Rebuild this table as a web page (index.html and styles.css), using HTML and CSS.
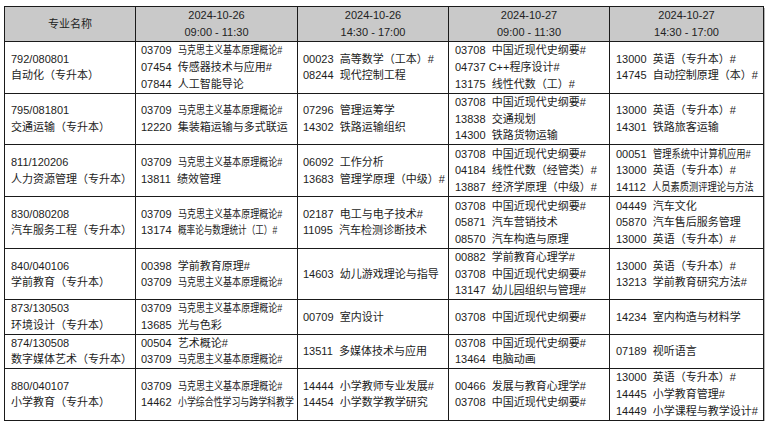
FILE: index.html
```html
<!DOCTYPE html>
<html lang="zh-CN">
<head>
<meta charset="utf-8">
<title>考试安排</title>
<link rel="stylesheet" href="styles.css">
</head>
<body>
<table class="sched">
  <colgroup>
    <col class="w1"><col class="w2"><col class="w3"><col class="w4"><col class="w5">
  </colgroup>
  <thead>
    <tr>
      <th>专业名称</th>
      <th><div>2024-10-26</div><div>09:00 - 11:30</div></th>
      <th><div>2024-10-26</div><div>14:30 - 17:00</div></th>
      <th><div>2024-10-27</div><div>09:00 - 11:30</div></th>
      <th><div>2024-10-27</div><div>14:30 - 17:00</div></th>
    </tr>
  </thead>
  <tbody>
    <tr class="r3">
      <td class="c1"><div>792/080801</div><div>自动化（专升本）</div></td>
      <td class="c2"><div>03709  <span class="sq sq82">马克思主义基本原理概论#</span></div><div>07454  传感器技术与应用#</div><div>07844  人工智能导论</div></td>
      <td class="c3"><div>00023  高等数学（工本）#</div><div>08244  现代控制工程</div></td>
      <td class="c4"><div>03708  中国近现代史纲要#</div><div>04737 C++程序设计#</div><div>13175  线性代数（工）#</div></td>
      <td class="c5"><div>13000  英语（专升本）#</div><div>14745  自动控制原理（本）#</div></td>
    </tr>
    <tr class="r3">
      <td class="c1"><div>795/081801</div><div>交通运输（专升本）</div></td>
      <td class="c2"><div>03709  <span class="sq sq82">马克思主义基本原理概论#</span></div><div>12220  集装箱运输与多式联运</div></td>
      <td class="c3"><div>07296  管理运筹学</div><div>14302  铁路运输组织</div></td>
      <td class="c4"><div>03708  中国近现代史纲要#</div><div>13838  交通规划</div><div>14300  铁路货物运输</div></td>
      <td class="c5"><div>13000  英语（专升本）#</div><div>14301  铁路旅客运输</div></td>
    </tr>
    <tr class="r3">
      <td class="c1"><div>811/120206</div><div>人力资源管理（专升本）</div></td>
      <td class="c2"><div>03709  <span class="sq sq82">马克思主义基本原理概论#</span></div><div>13811  绩效管理</div></td>
      <td class="c3"><div>06092  工作分析</div><div>13683  管理学原理（中级）#</div></td>
      <td class="c4"><div>03708  中国近现代史纲要#</div><div>04184  线性代数（经管类）#</div><div>13887  经济学原理（中级）#</div></td>
      <td class="c5"><div>00051  <span class="sq sq84">管理系统中计算机应用#</span></div><div>13000  英语（专升本）#</div><div>14112  <span class="sq sq84">人员素质测评理论与方法</span></div></td>
    </tr>
    <tr class="r3">
      <td class="c1"><div>830/080208</div><div>汽车服务工程（专升本）</div></td>
      <td class="c2"><div>03709  <span class="sq sq82">马克思主义基本原理概论#</span></div><div>13174  <span class="sq sq78">概率论与数理统计（工）#</span></div></td>
      <td class="c3"><div>02187  电工与电子技术#</div><div>11095  汽车检测诊断技术</div></td>
      <td class="c4"><div>03708  中国近现代史纲要#</div><div>05871  汽车营销技术</div><div>08570  汽车构造与原理</div></td>
      <td class="c5"><div>04449  汽车文化</div><div>05870  汽车售后服务管理</div><div>13000  英语（专升本）#</div></td>
    </tr>
    <tr class="r3">
      <td class="c1"><div>840/040106</div><div>学前教育（专升本）</div></td>
      <td class="c2"><div>00398  学前教育原理#</div><div>03709  <span class="sq sq82">马克思主义基本原理概论#</span></div></td>
      <td class="c3"><div>14603  幼儿游戏理论与指导</div></td>
      <td class="c4"><div>00882  学前教育心理学#</div><div>03708  中国近现代史纲要#</div><div>13147  幼儿园组织与管理#</div></td>
      <td class="c5"><div>13000  英语（专升本）#</div><div>13213  学前教育研究方法#</div></td>
    </tr>
    <tr class="r2">
      <td class="c1"><div>873/130503</div><div>环境设计（专升本）</div></td>
      <td class="c2"><div>03709  <span class="sq sq82">马克思主义基本原理概论#</span></div><div>13685  光与色彩</div></td>
      <td class="c3"><div>00709  室内设计</div></td>
      <td class="c4"><div>03708  中国近现代史纲要#</div></td>
      <td class="c5"><div>14234  室内构造与材料学</div></td>
    </tr>
    <tr class="r2">
      <td class="c1"><div>874/130508</div><div>数字媒体艺术（专升本）</div></td>
      <td class="c2"><div>00504  艺术概论#</div><div>03709  <span class="sq sq82">马克思主义基本原理概论#</span></div></td>
      <td class="c3"><div>13511  多媒体技术与应用</div></td>
      <td class="c4"><div>03708  中国近现代史纲要#</div><div>13464  电脑动画</div></td>
      <td class="c5"><div>07189  视听语言</div></td>
    </tr>
    <tr class="r3">
      <td class="c1"><div>880/040107</div><div>小学教育（专升本）</div></td>
      <td class="c2"><div>03709  <span class="sq sq82">马克思主义基本原理概论#</span></div><div>14462  <span class="sq sq81">小学综合性学习与跨学科教学</span></div></td>
      <td class="c3"><div>14444  小学教师专业发展#</div><div>14454  小学数学教学研究</div></td>
      <td class="c4"><div>00466  发展与教育心理学#</div><div>03708  中国近现代史纲要#</div></td>
      <td class="c5"><div>13000  英语（专升本）#</div><div>14445  小学教育管理#</div><div>14449  小学课程与教学设计#</div></td>
    </tr>
  </tbody>
</table>
</body>
</html>
```
FILE: styles.css
```css
html, body {
  margin: 0;
  padding: 0;
  background: #ffffff;
}
body {
  padding: 6px 0 0 4px;
  font-family: "Liberation Sans", "Noto Sans CJK SC", sans-serif;
  font-size: 11px;
  color: #1c1c1c;
}
.sched {
  border-collapse: collapse;
  table-layout: fixed;
  width: 759px;
  border: 1px solid #1a1a1a;
  box-shadow: 1px 2px 0 #b5b5b5;
}
.w1 { width: 131px; }
.w2 { width: 162px; }
.w3 { width: 151px; }
.w4 { width: 161px; }
.w5 { width: 154px; }
.sched th {
  background: #c9c9c9;
  font-weight: normal;
  color: #222;
  height: 34px;
  padding: 0;
  line-height: 16.6px;
  border: 1px solid #1a1a1a;
  text-align: center;
  vertical-align: middle;
}
.sched td {
  border: 1px solid #1a1a1a;
  border-top-color: #2a2a2a;
  padding: 0;
  line-height: 16.6px;
  vertical-align: middle;
  white-space: pre;
  overflow: visible;
}
.r3 td { height: 50.7px; }
.r2 td { height: 33.3px; }
.c1 { padding-left: 6px !important; }
.c2 { padding-left: 5px !important; }
.c3 { padding-left: 5px !important; }
.c4 { padding-left: 6px !important; }
.c5 { padding-left: 6px !important; }
.sq {
  display: inline-block;
  transform-origin: left center;
  vertical-align: top;
}
.sq82 { transform: scaleX(0.82); }
.sq84 { transform: scaleX(0.84); }
.sq81 { transform: scaleX(0.81); }
.sq78 { transform: scaleX(0.78); }
```
